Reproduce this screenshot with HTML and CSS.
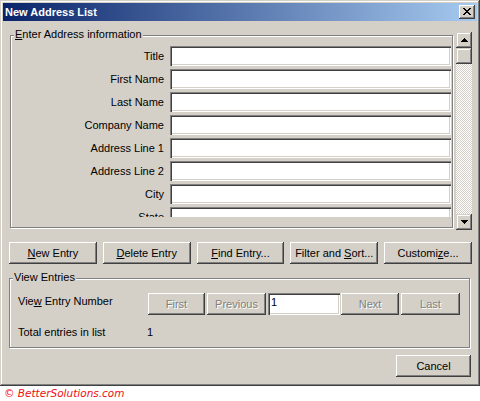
FILE: index.html
```html
<!DOCTYPE html>
<html lang="en">
<head>
<meta charset="utf-8">
<title>New Address List</title>
<link rel="stylesheet" href="styles.css">
</head>
<body>
<div class="window">
  <div class="titlebar">
    <span class="title">New Address List</span>
    <button class="close" aria-label="Close">
      <svg width="8" height="7" viewBox="0 0 8 7" shape-rendering="crispEdges">
        <path d="M0 0h2v1h-2zM6 0h2v1h-2zM1 1h2v1h-2zM5 1h2v1h-2zM2 2h4v1h-4zM3 3h2v1h-2zM2 4h4v1h-4zM1 5h2v1h-2zM5 5h2v1h-2zM0 6h2v1h-2zM6 6h2v1h-2z" fill="#000"/>
      </svg>
    </button>
  </div>
  <div class="content">
    <div class="top-row">
      <div class="group group-address">
        <span class="legend"><u>E</u>nter Address information</span>
        <div class="viewport">
          <div class="fields">
            <span class="label">Title</span><span class="textbox"></span>
            <span class="label">First Name</span><span class="textbox"></span>
            <span class="label">Last Name</span><span class="textbox"></span>
            <span class="label">Company Name</span><span class="textbox"></span>
            <span class="label">Address Line 1</span><span class="textbox"></span>
            <span class="label">Address Line 2</span><span class="textbox"></span>
            <span class="label">City</span><span class="textbox"></span>
            <span class="label">State</span><span class="textbox"></span>
          </div>
        </div>
      </div>
      <div class="scrollbar">
        <span class="sb-btn">
          <svg width="7" height="4" viewBox="0 0 7 4" shape-rendering="crispEdges"><path d="M3 0h1v1h1v1h1v1h1v1h-7v-1h1v-1h1v-1h1z" fill="#000"/></svg>
        </span>
        <span class="sb-thumb"></span>
        <span class="sb-track"></span>
        <span class="sb-btn">
          <svg width="7" height="4" viewBox="0 0 7 4" shape-rendering="crispEdges"><path d="M0 0h7v1h-1v1h-1v1h-1v1h-1v-1h-1v-1h-1v-1h-1z" fill="#000"/></svg>
        </span>
      </div>
    </div>

    <div class="actions">
      <button class="btn"><u>N</u>ew Entry</button>
      <button class="btn"><u>D</u>elete Entry</button>
      <button class="btn"><u>F</u>ind Entry...</button>
      <button class="btn">Filter and <u>S</u>ort...</button>
      <button class="btn">Customi<u>z</u>e...</button>
    </div>

    <div class="group group-view">
      <span class="legend">View Entries</span>
      <div class="nav-row">
        <span class="nav-label">Vie<u>w</u> Entry Number</span>
        <button class="btn disabled nav-first">First</button>
        <button class="btn disabled nav-prev">Previous</button>
        <span class="textbox nav-input">1</span>
        <button class="btn disabled nav-next">Next</button>
        <button class="btn disabled nav-last">Last</button>
      </div>
      <div class="total-row">
        <span class="nav-label">Total entries in list</span>
        <span class="total-value">1</span>
      </div>
    </div>

    <div class="footer">
      <button class="btn cancel">Cancel</button>
    </div>
  </div>
</div>
<div class="copyright">© BetterSolutions.com</div>
</body>
</html>
```

FILE: styles.css
```css
* { box-sizing: border-box; }

body {
  margin: 0;
  background: #fff;
  font-family: "Liberation Sans", Arial, sans-serif;
  font-size: 11px;
  line-height: 13px;
  color: #000;
}

u { text-decoration: underline; text-underline-offset: 1px; }

.window {
  width: 480px;
  height: 386px;
  padding: 3px;
  background: #d4d0c8;
  box-shadow: inset -1px -1px 0 #404040, inset 1px 1px 0 #d4d0c8,
              inset -2px -2px 0 #808080, inset 2px 2px 0 #fff;
  display: flex;
  flex-direction: column;
}

.titlebar {
  height: 18px;
  background: linear-gradient(to right, #0a246a, #a6caf0);
  display: flex;
  align-items: center;
  justify-content: space-between;
  padding-left: 2px;
}

.title {
  color: #fff;
  font-weight: bold;
  font-size: 11px;
}

.close {
  width: 16px;
  height: 14px;
  margin: 0 2px 0 0;
  padding: 0;
  border: 0;
  background: #d4d0c8;
  box-shadow: inset -1px -1px 0 #404040, inset 1px 1px 0 #fff,
              inset -2px -2px 0 #808080, inset 2px 2px 0 #d4d0c8;
  display: flex;
  align-items: center;
  justify-content: center;
}
.close svg { display: block; margin: 0 0 1px 0; }

.content {
  padding: 11px 5px 0 6px;
  display: flex;
  flex-direction: column;
}

.top-row {
  display: flex;
  height: 198px;
}

.group {
  position: relative;
  border: 1px solid #808080;
  box-shadow: inset 1px 1px 0 #fff, 1px 1px 0 #fff;
}

.legend {
  position: absolute;
  top: -8px;
  left: 3px;
  padding: 0 1px;
  background: #d4d0c8;
}

.group-address {
  margin: 3px 0 0 1px;
  width: 443px;
  height: 193px;
}

.viewport {
  height: 181px;
  overflow: hidden;
  padding-top: 10px;
}

.fields {
  display: grid;
  grid-template-columns: 1fr 281px;
  column-gap: 6px;
  row-gap: 3px;
  padding-right: 1px;
  align-items: center;
}

.label { text-align: right; }

.textbox {
  display: block;
  height: 20px;
  background: #fff;
  color: #000;
  box-shadow: inset 1px 1px 0 #808080, inset 2px 2px 0 #404040,
              inset -1px -1px 0 #fff, inset -2px -2px 0 #d4d0c8;
}

.scrollbar {
  width: 16px;
  margin-left: 3px;
  display: flex;
  flex-direction: column;
}

.sb-btn, .sb-thumb {
  height: 16px;
  flex: none;
  background: #d4d0c8;
  box-shadow: inset -1px -1px 0 #404040, inset 1px 1px 0 #d4d0c8,
              inset -2px -2px 0 #808080, inset 2px 2px 0 #fff;
  display: flex;
  align-items: center;
  justify-content: center;
}
.sb-btn svg { display: block; }

.sb-track {
  flex: 1;
  background: conic-gradient(#fff 0 25%, #d4d0c8 0 50%, #fff 0 75%, #d4d0c8 0) 0 0 / 2px 2px;
}

.btn {
  font: inherit;
  color: #000;
  height: 22px;
  padding: 0;
  border: 0;
  background: #d4d0c8;
  box-shadow: inset -1px -1px 0 #404040, inset 1px 1px 0 #fff,
              inset -2px -2px 0 #808080, inset 2px 2px 0 #d4d0c8;
  text-align: center;
}

.actions {
  margin-top: 12px;
  display: flex;
  gap: 6px;
}
.actions .btn { flex: 1; }

.group-view {
  margin-top: 14px;
  width: 461px;
  height: 70px;
  padding: 14px 0 0 8px;
}

.nav-row {
  display: flex;
  align-items: flex-start;
}

.nav-label {
  width: 130px;
  padding-top: 2px;
}

.btn.disabled {
  color: #808080;
  text-shadow: 1px 1px 0 #fff;
}

.nav-first { width: 57px; }
.nav-prev { width: 59px; margin-left: 2px; }
.nav-input { width: 72px; height: 22px; margin-left: 2px; padding: 3px 3px 0; }
.nav-next { width: 58px; margin-left: 1px; }
.nav-last { width: 59px; margin-left: 2px; }

.total-row {
  display: flex;
  margin-top: 11px;
}
.total-row .nav-label { padding-top: 0; width: 129px; }

.footer {
  margin-top: 7px;
  display: flex;
  justify-content: flex-end;
  padding-right: 1px;
}
.cancel { width: 75px; }

.copyright {
  padding: 1px 0 0 4px;
  font-family: "DejaVu Sans", Verdana, sans-serif;
  font-style: italic;
  font-size: 10.5px;
  line-height: 13px;
  color: #f01010;
}
```
